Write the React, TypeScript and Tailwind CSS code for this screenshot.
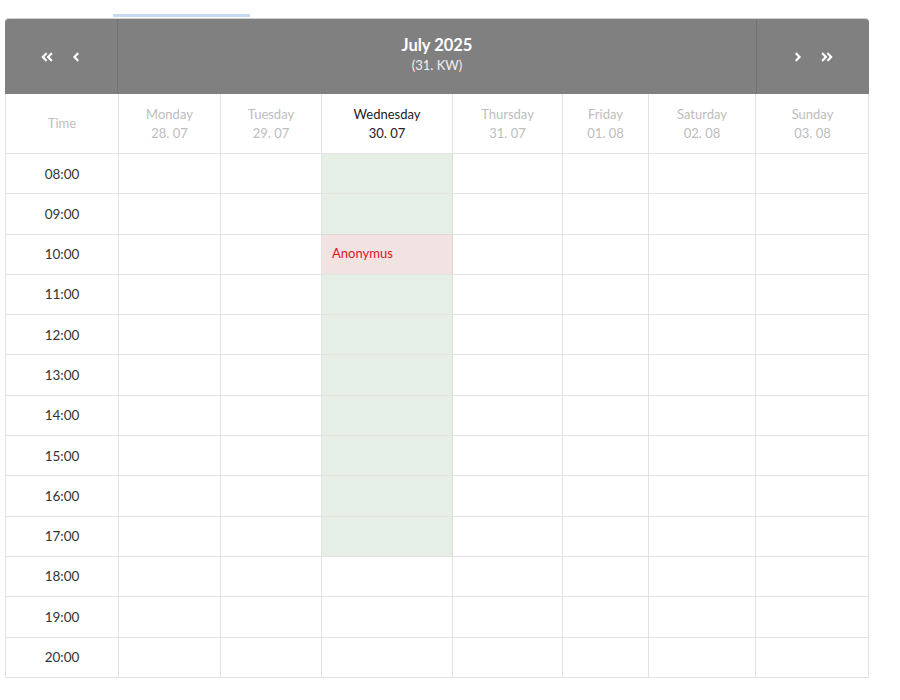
import { FaAngleDoubleLeft, FaAngleLeft, FaAngleRight, FaAngleDoubleRight } from 'react-icons/fa';

const days = [
  { name: 'Monday', date: '28. 07' },
  { name: 'Tuesday', date: '29. 07' },
  { name: 'Wednesday', date: '30. 07', today: true },
  { name: 'Thursday', date: '31. 07' },
  { name: 'Friday', date: '01. 08' },
  { name: 'Saturday', date: '02. 08' },
  { name: 'Sunday', date: '03. 08' },
];

const hours = ['08:00', '09:00', '10:00', '11:00', '12:00', '13:00', '14:00', '15:00', '16:00', '17:00', '18:00', '19:00', '20:00'];

const cols = 'grid grid-cols-[113px_102px_101px_131px_110px_86px_107px_113px]';

const App = () => {
  return (
    <div className="min-h-[700px] bg-white font-['Lato','Liberation_Sans',sans-serif]">
      <div className="ml-[113px] h-[3px] w-[137px] bg-[#c8daf2] mt-[14px]" />
      <div className="ml-[5px] w-[864px] mt-[1px]">
        {/* week navigation */}
        <div className="grid h-[76px] grid-cols-[113px_1fr_113px] rounded-t-[4px] border-t border-[#d0d0d0] bg-[#808080] text-white">
          <div className="flex items-center justify-center gap-[15px] border-r border-[#737373] pl-[1px]">
            <FaAngleDoubleLeft className="h-[14px] w-[14px]" />
            <FaAngleLeft className="h-[14px] w-[14px]" />
          </div>
          <div className="flex flex-col items-center justify-center pb-[6px]">
            <div className="text-[16.5px] font-bold leading-[22px]">July 2025</div>
            <div className="text-[13px] leading-[18px] text-[#f0f0f0]">(31. KW)</div>
          </div>
          <div className="flex items-center justify-center gap-[15px] border-l border-[#737373] pr-[2px]">
            <FaAngleRight className="h-[14px] w-[14px]" />
            <FaAngleDoubleRight className="h-[14px] w-[14px]" />
          </div>
        </div>

        {/* day header */}
        <div className={`${cols} h-[60px] border-x border-b border-[#e3e3e3] text-[13px] leading-[19px]`}>
          <div className="flex items-center justify-center border-r border-[#e3e3e3] text-[#bdbdbd]">Time</div>
          {days.map((d, i) => (
            <div
              key={d.name}
              className={`flex flex-col items-center justify-center pt-[1px] ${i < 6 ? 'border-r border-[#e3e3e3]' : ''} ${d.today ? 'text-[#222]' : 'text-[#bdbdbd]'}`}
            >
              <span>{d.name}</span>
              <span>{d.date}</span>
            </div>
          ))}
        </div>

        {/* time rows */}
        {hours.map((h, r) => (
          <div key={h} className={`${cols} h-[40.3px] border-x border-b border-[#e3e3e3]`}>
            <div className="flex items-center justify-center border-r border-[#e3e3e3] text-[13.5px] text-[#333]">{h}</div>
            {days.map((d, i) => {
              const open = d.today && r < 10;
              const booked = d.today && h === '10:00';
              let cls = 'border-r border-[#e3e3e3]';
              if (booked) cls = 'bg-[#f2e3e3] border-r border-[#dcd4d4] -mt-px border-t border-t-[#e2d6d6]';
              else if (open) cls = 'bg-[#e6efe6] border-r border-[#d6e0d6]';
              if (i === 6) cls = '';
              return (
                <div key={d.name} className={`flex items-center ${cls}`}>
                  {booked && <span className="pl-[10px] text-[13px] text-[#e3101c]">Anonymus</span>}
                </div>
              );
            })}
          </div>
        ))}
      </div>
    </div>
  );
};

export default App;
